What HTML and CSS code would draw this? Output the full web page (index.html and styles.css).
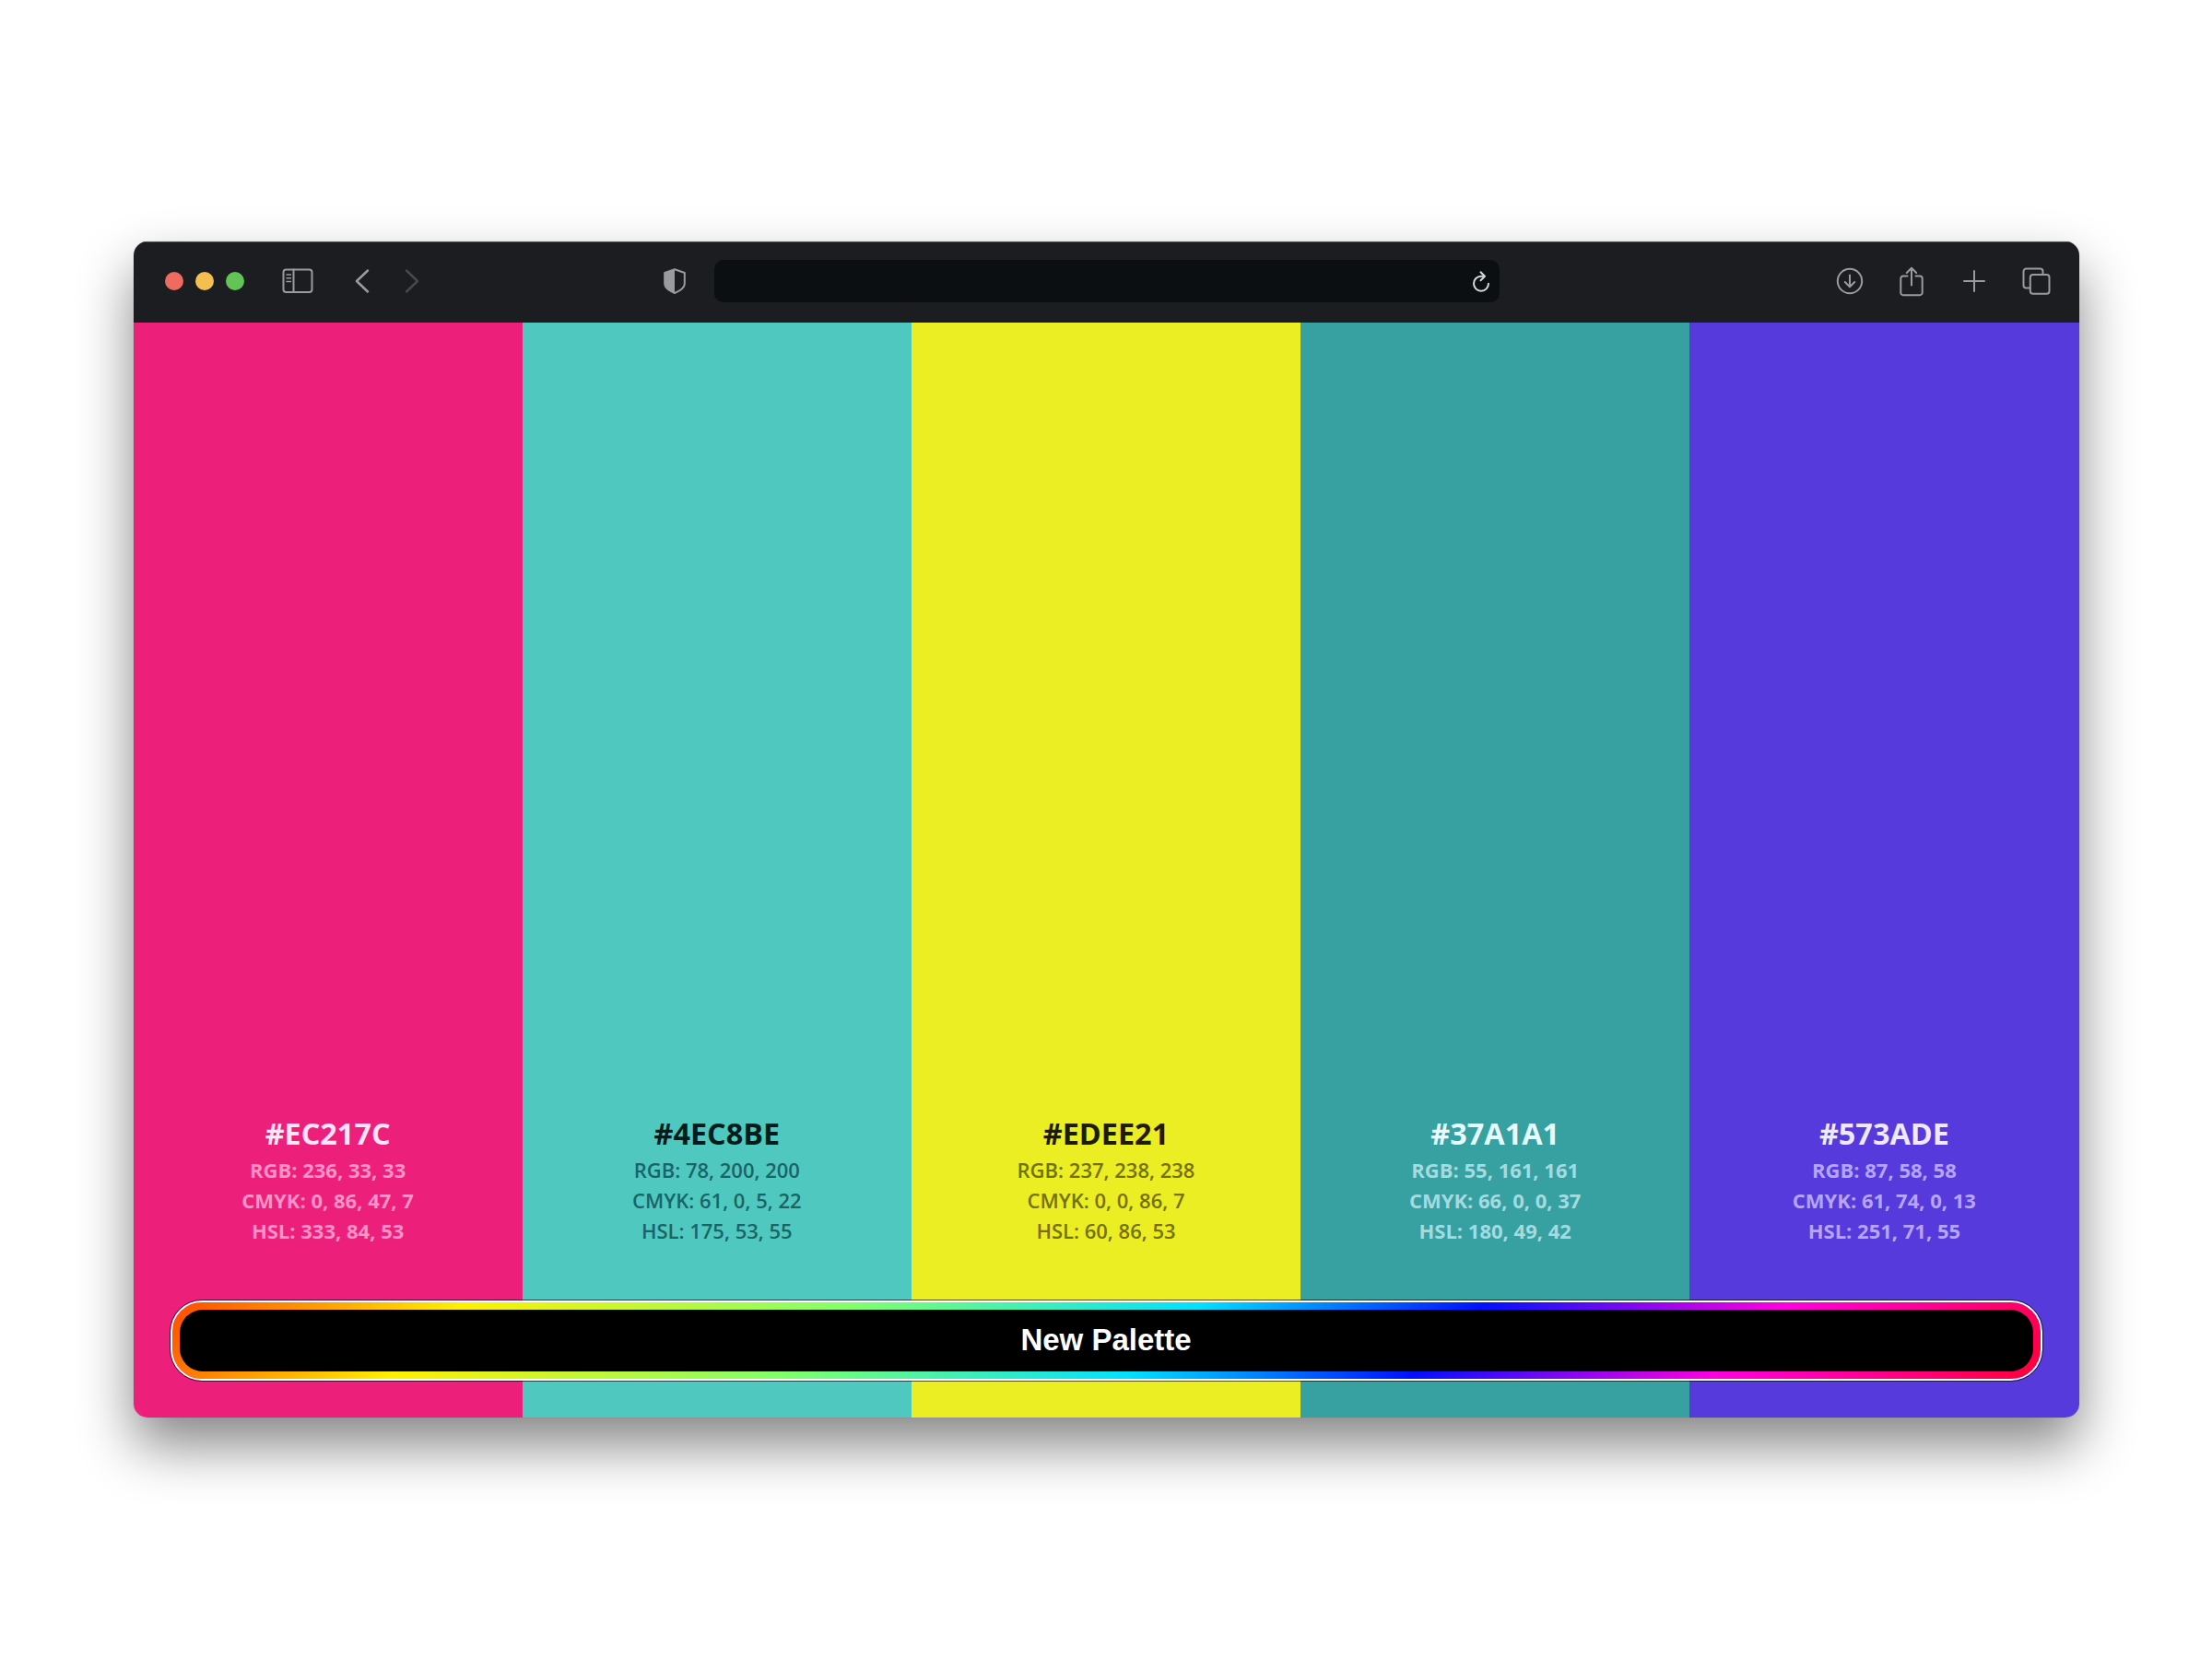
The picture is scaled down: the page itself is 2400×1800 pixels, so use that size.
FILE: index.html
```html
<!DOCTYPE html>
<html lang="en">
<head>
    <meta charset="UTF-8">
    <meta name="viewport" content="width=device-width, initial-scale=1.0">
    <title>Palette Generator</title>
    <link rel="stylesheet" href="styles.css">
</head>
<body>
    <div class="window">
        <header class="toolbar">
            <div class="toolbar-left">
                <div class="lights">
                    <span class="light red"></span>
                    <span class="light yellow"></span>
                    <span class="light green"></span>
                </div>
                <svg class="icon sidebar-icon" width="34" height="28" viewBox="0 0 34 28">
                    <rect x="1.5" y="1.5" width="31" height="24.5" rx="3"/>
                    <path d="M12.5 1.5v24.5"/>
                    <path class="thin" d="M5 7h4.5M5 10.7h4.5M5 14.4h4.5"/>
                </svg>
                <svg class="icon back-icon" width="16" height="28" viewBox="0 0 16 28">
                    <path d="M14 2.5L2 14l12 11.5"/>
                </svg>
                <svg class="icon forward-icon" width="16" height="28" viewBox="0 0 16 28">
                    <path d="M2 2.5L14 14 2 25.5"/>
                </svg>
                <svg class="icon shield-icon" width="24" height="28" viewBox="0 0 24 28">
                    <path d="M12 1.2L22.8 5v12c0 4-5 7.500-10.800 10C6.200 24.500 1.200 21 1.200 17V5z"/>
                    <path class="fill" d="M12 1L1 5v12c0 4 5 7.500 11 10z"/>
                </svg>
            </div>
            <div class="address-bar">
                <svg class="icon reload-icon" width="20" height="24" viewBox="0 0 20 24">
                    <path d="M12.700 6.700H10a8 8 0 1 0 8 8"/>
                    <path d="M9.500 2.200l4.500 4.500-4.500 4.500"/>
                </svg>
            </div>
            <div class="toolbar-right">
                <svg class="icon" width="30" height="30" viewBox="0 0 30 30">
                    <circle cx="15" cy="15" r="13.200"/>
                    <path d="M15 8.500v12.500M9.800 16l5.200 5.200 5.200-5.200"/>
                </svg>
                <svg class="icon share-icon" width="26" height="34" viewBox="0 0 26 34">
                    <path d="M8.500 11.500H4a2.700 2.700 0 0 0-2.700 2.700V29.500A2.700 2.700 0 0 0 4 32.200h18a2.700 2.700 0 0 0 2.700-2.700V14.200a2.700 2.700 0 0 0-2.700-2.700h-4.500"/>
                    <path d="M13 21.500V3M7.800 8L13 2.800 18.200 8"/>
                </svg>
                <svg class="icon plus-icon" width="24" height="24" viewBox="0 0 24 24">
                    <path d="M12 1v22M1 12h22"/>
                </svg>
                <svg class="icon tabs-icon" width="31" height="30" viewBox="0 0 31 30">
                    <path d="M8.500 22.500H4.500a3 3 0 0 1-3-3V4.500a3 3 0 0 1 3-3h15a3 3 0 0 1 3 3V8"/>
                    <rect x="8.800" y="8" width="20.700" height="20.700" rx="3"/>
                </svg>
            </div>
        </header>

        <main class="palette">
            <section class="color pink">
                <h2>#EC217C</h2>
                <p>RGB: 236, 33, 33</p>
                <p>CMYK: 0, 86, 47, 7</p>
                <p>HSL: 333, 84, 53</p>
            </section>
            <section class="color aqua">
                <h2>#4EC8BE</h2>
                <p>RGB: 78, 200, 200</p>
                <p>CMYK: 61, 0, 5, 22</p>
                <p>HSL: 175, 53, 55</p>
            </section>
            <section class="color lemon">
                <h2>#EDEE21</h2>
                <p>RGB: 237, 238, 238</p>
                <p>CMYK: 0, 0, 86, 7</p>
                <p>HSL: 60, 86, 53</p>
            </section>
            <section class="color teal">
                <h2>#37A1A1</h2>
                <p>RGB: 55, 161, 161</p>
                <p>CMYK: 66, 0, 0, 37</p>
                <p>HSL: 180, 49, 42</p>
            </section>
            <section class="color violet">
                <h2>#573ADE</h2>
                <p>RGB: 87, 58, 58</p>
                <p>CMYK: 61, 74, 0, 13</p>
                <p>HSL: 251, 71, 55</p>
            </section>
            <button class="new-palette" type="button"><span>New Palette</span></button>
        </main>
    </div>
</body>
</html>
```
FILE: styles.css
```css
* {
    box-sizing: border-box;
}
body {
    margin: 0;
    height: 100vh;
    display: flex;
    align-items: center;
    justify-content: center;
    background-color: #fff;
    font-family: "Open Sans", "Noto Sans", sans-serif;
}
.window {
    width: 2111px;
    height: 1276px;
    display: flex;
    flex-direction: column;
    border-radius: 15px;
    overflow: hidden;
    box-shadow: 0 0 1px 0 rgba(0,0,0,0.4), 0 30px 60px rgba(0,0,0,0.48);
}

/* browser toolbar */
.toolbar {
    height: 88px;
    flex: none;
    display: grid;
    grid-template-columns: 1fr 851px 1fr;
    align-items: center;
    background-color: #1c1d20;
    border-top: 1px solid #4b4c4e;
    padding: 0 31px 3px 34px;
}
.toolbar-left,
.toolbar-right,
.lights {
    display: flex;
    align-items: center;
}
.toolbar-left {
    margin-right: 1px;
}
.lights {
    gap: 13px;
}
.light {
    width: 20px;
    height: 20px;
    border-radius: 50%;
}
.red { background-color: #ed6b60; }
.yellow { background-color: #f5bf4f; }
.green { background-color: #61c454; }
.icon {
    flex: none;
    fill: none;
    stroke: #9a9b9e;
    stroke-width: 2;
    stroke-linecap: round;
    stroke-linejoin: round;
}
.icon .thin {
    stroke-width: 1.5;
}
.icon .fill {
    fill: #9a9b9e;
    stroke: none;
}
.sidebar-icon { margin-left: 41px; }
.back-icon { margin-left: 45px; stroke-width: 2.5; }
.forward-icon { margin-left: 38px; stroke: #47484b; stroke-width: 2.5; }
.shield-icon { margin-left: auto; margin-right: 31px; }
.address-bar {
    height: 46px;
    display: flex;
    align-items: center;
    justify-content: flex-end;
    margin-left: -1px;
    padding-right: 10px;
    border-radius: 10px;
    background-color: #0b0f12;
}
.reload-icon { stroke: #d7d8d9; }
.toolbar-right {
    justify-content: flex-end;
}
.share-icon { margin-left: 39px; }
.plus-icon { margin-left: 43px; }
.tabs-icon { margin-left: 40px; }

/* colour columns */
.palette {
    flex: 1;
    display: grid;
    grid-template-columns: repeat(5, 1fr);
    grid-template-rows: 1fr 87px 40px;
}
.color {
    grid-row: 1 / -1;
    display: flex;
    flex-direction: column;
    justify-content: flex-end;
    align-items: center;
    padding-bottom: 186px;
}
.color h2 {
    margin: 0 0 2px;
    font-size: 32.4px;
    line-height: 44px;
    font-weight: 700;
}
.color p {
    margin: 0;
    font-size: 22px;
    line-height: 33px;
    font-weight: 700;
}
.pink { grid-column: 1; background-color: #ec1f7b; color: #ffe3f6; }
.pink p { color: #ff93c8; }
.aqua { grid-column: 2; background-color: #4fc9bf; color: #041d1c; }
.aqua p { color: #1b6466; }
.lemon { grid-column: 3; background-color: #ebee22; color: #1f1c00; }
.lemon p { color: #757006; }
.teal { grid-column: 4; background-color: #37a0a1; color: #e6fbff; }
.teal p { color: #a3dbe0; }
.violet { grid-column: 5; background-color: #573adc; color: #efe9ff; }
.violet p { color: #b5a6fb; }

/* dark text looks heavier, so these two get a lighter weight */
.aqua p,
.lemon p {
    font-weight: 650;
}

.new-palette {
    grid-column: 1 / -1;
    grid-row: 2;
    margin: 0 40px;
    padding: 8px;
    border: 2px solid #fff;
    outline: 1px solid rgba(0,0,0,0.65);
    outline-offset: 0;
    border-radius: 34px;
    background: linear-gradient(135deg, #ff4a00 0%, #ff8a00 6%, #fff000 15%, #82ff6a 35%, #00e1ff 53%, #0010ff 67.5%, #ff00e0 83%, #ff0037 100%) padding-box;
    font-family: "Liberation Sans", Arial, sans-serif;
    cursor: pointer;
}
.new-palette span {
    height: 100%;
    display: flex;
    align-items: center;
    justify-content: center;
    padding-bottom: 1px;
    border-radius: 25px;
    background-color: #000;
    color: #fff;
    font-size: 33px;
    font-weight: 700;
}
```
